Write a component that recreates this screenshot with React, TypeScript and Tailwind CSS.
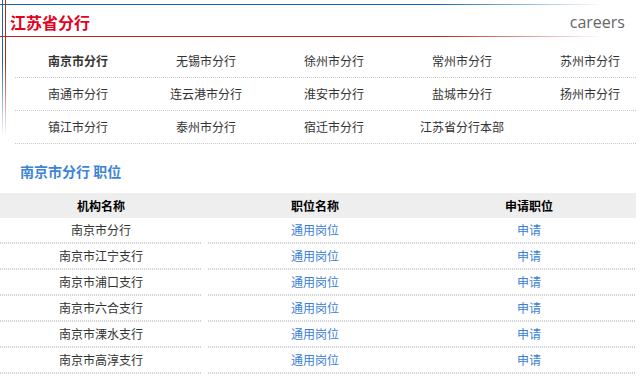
const branches = [
  "南京市分行",
  "无锡市分行",
  "徐州市分行",
  "常州市分行",
  "苏州市分行",
  "南通市分行",
  "连云港市分行",
  "淮安市分行",
  "盐城市分行",
  "扬州市分行",
  "镇江市分行",
  "泰州市分行",
  "宿迁市分行",
  "江苏省分行本部",
]

const jobs = [
  "南京市分行",
  "南京市江宁支行",
  "南京市浦口支行",
  "南京市六合支行",
  "南京市溧水支行",
  "南京市高淳支行",
]

function DotRule() {
  return (
    <div className="h-[2px] w-full bg-[linear-gradient(to_right,#d2d2d2_50%,transparent_50%)] bg-[length:2px_2px] bg-repeat-x" />
  )
}

function Cell({ children, className }: { children: React.ReactNode; className: string }) {
  return (
    <div className={`flex flex-col ${className}`}>
      <div className="flex h-[24px] items-center justify-center">{children}</div>
      <DotRule />
    </div>
  )
}

export default function App() {
  const rows = [branches.slice(0, 5), branches.slice(5, 10), branches.slice(10)]

  return (
    <div className="relative h-[381px] w-[641px] overflow-hidden bg-white font-['Noto_Sans_CJK_SC',sans-serif] text-[12px] text-[#333]">
      {/* frame lines */}
      <div className="absolute left-0 top-[4px] h-px w-full bg-[linear-gradient(to_right,#1268b3_0%,#1268b3_68%,rgba(18,104,179,0)_94%)]" />
      <div className="absolute left-0 top-[36px] h-px w-full bg-[linear-gradient(to_right,#b8281a_0%,#b8281a_68%,rgba(184,40,26,0)_94%)]" />
      <div className="absolute left-[2px] top-0 h-[138px] w-px bg-[linear-gradient(to_bottom,#1268b3_0%,#1268b3_45%,rgba(18,104,179,0)_100%)]" />
      <div className="absolute left-[5px] top-0 h-[138px] w-px bg-[linear-gradient(to_bottom,#b8281a_0%,#b8281a_45%,rgba(184,40,26,0)_100%)]" />

      {/* header */}
      <div className="flex h-[38px] items-center justify-between pl-[10px] pr-[16px] pt-[5px]">
        <h1 className="text-[16px] font-bold leading-none text-[#e5001c]">江苏省分行</h1>
        <span className="font-['Open_Sans',sans-serif] text-[16px] leading-none text-[#666]">careers</span>
      </div>

      {/* branch nav */}
      <div className="ml-[15px] mt-[7px] w-[621px]">
        {rows.map((row, i) => (
          <div key={i} className="h-[33px] border-b border-dotted border-[#c8c8c8]">
            <div className="-ml-px grid h-[32px] grid-cols-[repeat(5,128px)] items-center">
              {row.map((b, j) => (
                <span key={b} className={`text-center ${i === 0 && j === 0 ? "font-bold" : ""}`}>
                  {b}
                </span>
              ))}
            </div>
          </div>
        ))}
      </div>

      {/* section title */}
      <h2 className="ml-[20px] mt-[17px] h-[20px] text-[14px] font-bold leading-[20px] text-[#3d84d6]">
        南京市分行 职位
      </h2>

      {/* job table */}
      <div className="mt-[12px] w-[636px]">
        <div className="grid h-[25px] grid-cols-[208px_214px_214px] items-center bg-[#eeeeee] font-bold text-black">
          <span className="pr-[6px] text-center">机构名称</span>
          <span className="text-center">职位名称</span>
          <span className="text-center">申请职位</span>
        </div>
        {jobs.map((j) => (
          <div key={j} className="grid grid-cols-[208px_214px_214px]">
            <Cell className="pr-[6px]">{j}</Cell>
            <Cell className="text-[#3a80d8]">通用岗位</Cell>
            <Cell className="text-[#3a80d8]">申请</Cell>
          </div>
        ))}
      </div>
    </div>
  )
}
